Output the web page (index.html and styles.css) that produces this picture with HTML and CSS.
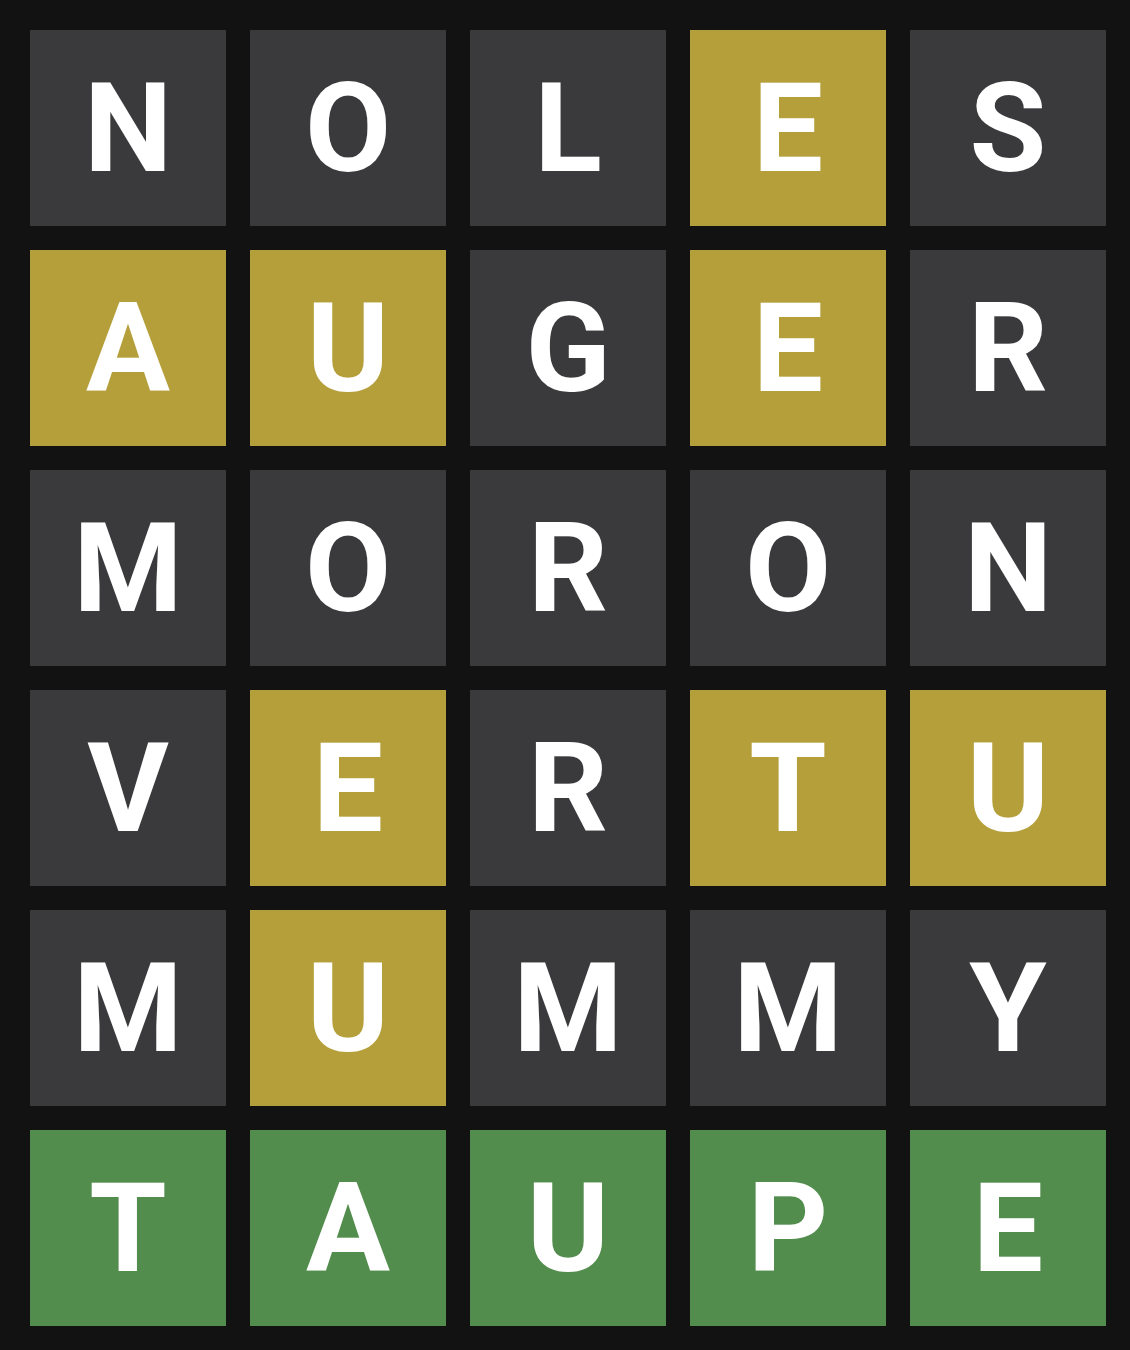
FILE: index.html
```html
<!DOCTYPE html>
<html>
<head>
<meta charset="utf-8">
<link rel="stylesheet" href="styles.css">
</head>
<body>
<div class="board">
  <div class="tile absent">N</div><div class="tile absent">O</div><div class="tile absent">L</div><div class="tile present">E</div><div class="tile absent">S</div>
  <div class="tile present">A</div><div class="tile present">U</div><div class="tile absent">G</div><div class="tile present">E</div><div class="tile absent">R</div>
  <div class="tile absent">M</div><div class="tile absent">O</div><div class="tile absent">R</div><div class="tile absent">O</div><div class="tile absent">N</div>
  <div class="tile absent">V</div><div class="tile present">E</div><div class="tile absent">R</div><div class="tile present">T</div><div class="tile present">U</div>
  <div class="tile absent">M</div><div class="tile present">U</div><div class="tile absent">M</div><div class="tile absent">M</div><div class="tile absent">Y</div>
  <div class="tile correct">T</div><div class="tile correct">A</div><div class="tile correct">U</div><div class="tile correct">P</div><div class="tile correct">E</div>
</div>
</body>
</html>
```
FILE: styles.css
```css
html, body {
  margin: 0;
  padding: 0;
  background: #121212;
}
.board {
  display: grid;
  grid-template-columns: repeat(5, 196px);
  grid-auto-rows: 196px;
  gap: 24px;
  padding: 30px 24px 24px 30px;
}
.tile {
  display: flex;
  align-items: center;
  justify-content: center;
  color: #ffffff;
  font-family: Roboto, "Liberation Sans", sans-serif;
  font-weight: 700;
  font-size: 125px;
  line-height: 1;
}
.absent { background: #3a3a3c; }
.present { background: #b59f3b; }
.correct { background: #538d4e; }
```
